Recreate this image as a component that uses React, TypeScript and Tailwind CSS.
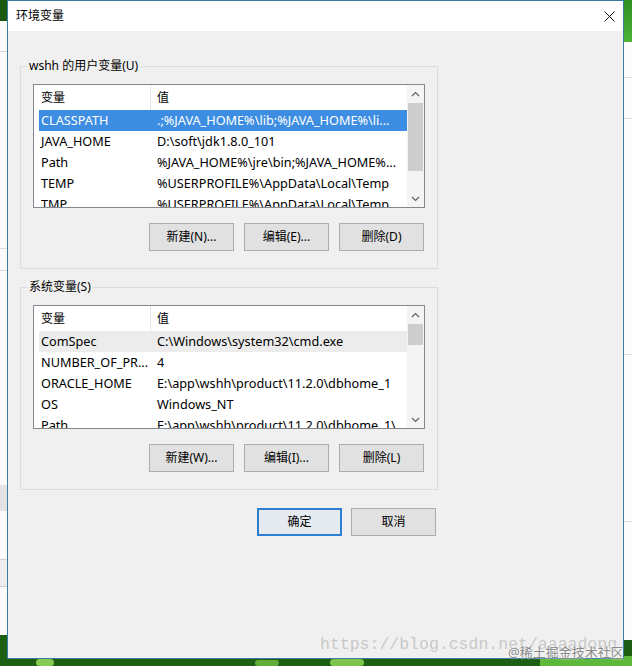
import React from "react";

type Row = [string, string];

const userVars: Row[] = [
  ["CLASSPATH", ".;%JAVA_HOME%\\lib;%JAVA_HOME%\\li..."],
  ["JAVA_HOME", "D:\\soft\\jdk1.8.0_101"],
  ["Path", "%JAVA_HOME%\\jre\\bin;%JAVA_HOME%..."],
  ["TEMP", "%USERPROFILE%\\AppData\\Local\\Temp"],
  ["TMP", "%USERPROFILE%\\AppData\\Local\\Temp"],
];

const sysVars: Row[] = [
  ["ComSpec", "C:\\Windows\\system32\\cmd.exe"],
  ["NUMBER_OF_PR...", "4"],
  ["ORACLE_HOME", "E:\\app\\wshh\\product\\11.2.0\\dbhome_1"],
  ["OS", "Windows_NT"],
  ["Path", "E:\\app\\wshh\\product\\11.2.0\\dbhome_1\\..."],
];

function ChevronUp() {
  return (
    <svg width="9" height="6" viewBox="0 0 9 6">
      <polyline points="1,5 4.5,1.5 8,5" fill="none" stroke="#606060" strokeWidth="1.2" />
    </svg>
  );
}
function ChevronDown() {
  return (
    <svg width="9" height="6" viewBox="0 0 9 6">
      <polyline points="1,1 4.5,4.5 8,1" fill="none" stroke="#606060" strokeWidth="1.2" />
    </svg>
  );
}

function ListBox({
  rows,
  focused,
  thumbClass,
}: {
  rows: Row[];
  focused: boolean;
  thumbClass: string;
}) {
  return (
    <div className="w-[392px] h-[124px] border border-[#828790] bg-white flex overflow-hidden">
      <div className="flex-1 flex flex-col overflow-hidden">
        <div className="h-[25px] shrink-0 flex">
          <div className="w-[117px] h-full flex items-center pl-[7px] border-r border-[#e5e5e5]">变量</div>
          <div className="h-full flex items-center pl-[6px]">值</div>
        </div>
        {rows.map((r, i) => {
          const sel = i === 0;
          const cls = sel
            ? focused
              ? "bg-[#3d8ee2] text-white"
              : "bg-[#ececec]"
            : "";
          return (
            <div
              key={i}
              className={`ml-[5px] h-[21px] shrink-0 flex items-center whitespace-nowrap text-[12.7px] ${cls}`}
            >
              <div className="w-[111px] pl-[2px] overflow-hidden">{r[0]}</div>
              <div className="pl-[7px] overflow-hidden">{r[1]}</div>
            </div>
          );
        })}
      </div>
      <div className="w-[17px] shrink-0 flex flex-col bg-[#f4f4f4]">
        <div className="h-[17px] flex items-center justify-center">
          <ChevronUp />
        </div>
        <div className="flex-1 flex flex-col px-[1px] pt-[1px]">
          <div className={`bg-[#cdcdcd] ${thumbClass}`} />
        </div>
        <div className="h-[17px] flex items-center justify-center">
          <ChevronDown />
        </div>
      </div>
    </div>
  );
}

function WinButton({ children }: { children: React.ReactNode }) {
  return (
    <button className="w-[85px] h-[28px] border border-[#adadad] bg-[#e1e1e1] flex items-center justify-center">
      {children}
    </button>
  );
}

function Group({
  label,
  rows,
  focused,
  thumbClass,
  buttons,
  className,
}: {
  label: string;
  rows: Row[];
  focused: boolean;
  thumbClass: string;
  buttons: string[];
  className?: string;
}) {
  return (
    <fieldset className={`w-[418px] border border-[#dcdcdc] p-0 m-0 ${className ?? ""}`}>
      <legend className="ml-[6px] px-[2px] leading-[16px]">{label}</legend>
      <div className="px-[12px] pt-[10px] pb-[17px] flex flex-col">
        <ListBox rows={rows} focused={focused} thumbClass={thumbClass} />
        <div className="flex justify-end gap-[10px] mt-[15px] pr-[1px]">
          {buttons.map((b) => (
            <WinButton key={b}>{b}</WinButton>
          ))}
        </div>
      </div>
    </fieldset>
  );
}

export default function App() {
  return (
    <div className="relative w-[632px] h-[666px] overflow-hidden bg-[#1c5e12] font-['Noto_Sans','Noto_Sans_CJK_SC',sans-serif] text-[12px] text-black">
      {/* desktop / windows behind the dialog */}
      <div className="absolute left-0 top-0 w-[7px] h-[21px] bg-[#1a5a10]" />
      <div className="absolute left-0 top-[21px] w-[7px] h-[614px] bg-[#fbfbfb] flex flex-col">
        <div className="h-[30px]" />
        <div className="h-px bg-[#d6d6d6]" />
        <div className="h-[196px]" />
        <div className="h-px bg-[#dcdcdc]" />
        <div className="h-[21px]" />
        <div className="h-px bg-[#dcdcdc]" />
        <div className="h-[214px]" />
        <div className="h-[26px] bg-[#e3e3e3]" />
        <div className="h-[48px]" />
        <div className="h-px bg-[#d0d0d0]" />
        <div className="h-[26px] bg-[#ededed]" />
        <div className="h-px bg-[#d0d0d0]" />
      </div>
      <div className="absolute left-[624px] top-0 w-[8px] h-[42px] bg-gradient-to-b from-[#2f8f20] to-[#4bb336]" />
      <div className="absolute left-[624px] top-[42px] w-[8px] h-[598px] bg-[#fbfbfb] flex flex-col">
        <div className="h-[35px]" />
        <div className="h-px bg-[#dcdcdc]" />
        <div className="h-[40px]" />
        <div className="h-px bg-[#dcdcdc]" />
        <div className="h-[235px]" />
        <div className="h-px bg-[#dcdcdc]" />
        <div className="h-[166px]" />
        <div className="h-px bg-[#dcdcdc]" />
      </div>
      <div className="absolute left-[36px] top-[659px] w-[18px] h-[7px] rounded-full bg-[#86cc52]" />
      <div className="absolute left-[255px] top-[660px] w-[24px] h-[6px] rounded-full bg-[#5fae3a]" />
      <div className="absolute left-[330px] top-[659px] w-[34px] h-[7px] rounded-full bg-[#7cc44a]" />
      <div className="absolute left-[540px] top-[656px] w-[92px] h-[10px] bg-[#5db83a]" />

      {/* dialog */}
      <div className="absolute left-[7px] top-0 w-[617px] h-[659px] border border-[#3b7ca3] bg-[#f0f0f0] flex flex-col">
        <div className="h-[30px] shrink-0 bg-white flex items-center justify-between pl-[8px]">
          <span>环境变量</span>
          <div className="w-[28px] h-[30px] flex items-center justify-center">
            <svg width="11" height="11" viewBox="0 0 11 11">
              <path d="M0.5 0.5L10.5 10.5M10.5 0.5L0.5 10.5" stroke="#111" strokeWidth="1" />
            </svg>
          </div>
        </div>
        <div className="flex flex-col px-[12px] pt-[27px]">
          <Group
            label="wshh 的用户变量(U)"
            rows={userVars}
            focused={true}
            thumbClass="h-[68px]"
            buttons={["新建(N)...", "编辑(E)...", "删除(D)"]}
          />
          <Group
            className="mt-[10px]"
            label="系统变量(S)"
            rows={sysVars}
            focused={false}
            thumbClass="h-[21px]"
            buttons={["新建(W)...", "编辑(I)...", "删除(L)"]}
          />
          <div className="w-[418px] flex justify-end gap-[9px] pr-[2px] mt-[18px]">
            <button className="w-[85px] h-[28px] border-2 border-[#2f7fd0] bg-[#e4eaf0] flex items-center justify-center">
              确定
            </button>
            <button className="w-[85px] h-[28px] border border-[#adadad] bg-[#e1e1e1] flex items-center justify-center">
              取消
            </button>
          </div>
        </div>
      </div>

      {/* watermarks */}
      <div className="absolute left-[320px] top-[634px] text-[16.5px] leading-[22px] font-['Liberation_Mono',monospace] text-[#c9c9c9] whitespace-nowrap">
        https://blog.csdn.net/aaaadong
      </div>
      <div className="absolute left-[508px] top-[643px] text-[13px] leading-[18px] text-[#8a8a8a] whitespace-nowrap [text-shadow:0_0_2px_#fff]">
        @稀土掘金技术社区
      </div>
    </div>
  );
}
